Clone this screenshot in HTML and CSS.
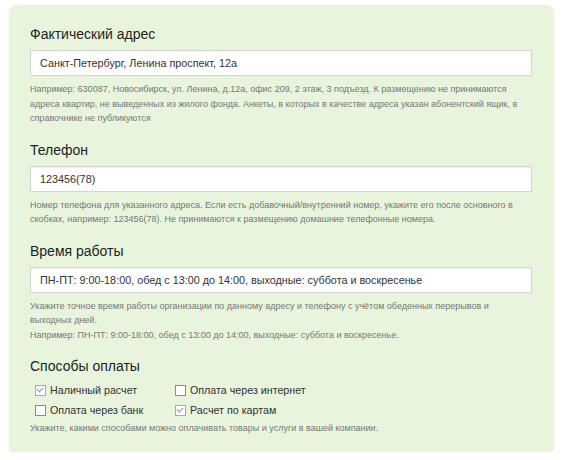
FILE: index.html
```html
<!DOCTYPE html>
<html lang="ru">
<head>
<meta charset="utf-8">
<link rel="stylesheet" href="styles.css">
</head>
<body>
<form class="panel">
  <div class="field">
    <h2 class="label">Фактический адрес</h2>
    <div class="input">Санкт-Петербург, Ленина проспект, 12а</div>
    <p class="help">Например: 630087, Новосибирск, ул. Ленина, д.12а, офис 209, 2 этаж, 3 подъезд. К размещению не принимаются<br>адреса квартир, не выведенных из жилого фонда. Анкеты, в которых в качестве адреса указан абонентский ящик, в<br>справочнике не публикуются</p>
  </div>
  <div class="field">
    <h2 class="label">Телефон</h2>
    <div class="input">123456(78)</div>
    <p class="help">Номер телефона для указанного адреса. Если есть добавочный/внутренний номер, укажите его после основного в<br>скобках, например: 123456(78). Не принимаются к размещению домашние телефонные номера.</p>
  </div>
  <div class="field">
    <h2 class="label">Время работы</h2>
    <div class="input">ПН-ПТ: 9:00-18:00, обед с 13:00 до 14:00, выходные: суббота и воскресенье</div>
    <p class="help">Укажите точное время работы организации по данному адресу и телефону с учётом обеденных перерывов и<br>выходных дней.<br>Например: ПН-ПТ: 9:00-18:00, обед с 13:00 до 14:00, выходные: суббота и воскресенье.</p>
  </div>
  <div class="field last">
    <h2 class="label">Способы оплаты</h2>
    <div class="checks">
      <label class="check"><span class="box on"></span>Наличный расчет</label>
      <label class="check"><span class="box"></span>Оплата через интернет</label>
      <label class="check"><span class="box"></span>Оплата через банк</label>
      <label class="check"><span class="box on"></span>Расчет по картам</label>
    </div>
    <p class="help short">Укажите, какими способами можно оплачивать товары и услуги в вашей компании.</p>
  </div>
</form>
</body>
</html>
```
FILE: styles.css
```css
html, body {
  margin: 0;
  padding: 0;
  background: #ffffff;
}
body {
  font-family: "Liberation Sans", Arial, sans-serif;
  color: #222;
}
.panel {
  margin: 5px 0 0 10px;
  width: 543px;
  box-sizing: border-box;
  padding: 19px 21px 16px 20px;
  background: #e8f4dc;
  border-radius: 6px;
  box-shadow: 0 2px 4px rgba(0, 0, 0, 0.13);
}
.field {
  margin-bottom: 14px;
}
.field.last {
  margin-bottom: 0;
}
.label {
  margin: 0 0 6px;
  font-size: 14px;
  line-height: 20px;
  font-weight: normal;
  color: #1e1e1e;
}
.input {
  height: 26px;
  box-sizing: border-box;
  border: 1px solid #d2d6cf;
  background: #fff;
  padding: 0 9px;
  font-size: 10.8px;
  line-height: 24px;
  color: #333;
  box-shadow: inset 0 1px 2px rgba(0, 0, 0, 0.06);
  white-space: nowrap;
}
.help {
  margin: 6px 0 0;
  font-size: 9px;
  line-height: 14.5px;
  color: #777;
  white-space: nowrap;
}
.help.short {
  margin-top: 3px;
}
.checks {
  display: grid;
  grid-template-columns: 140px auto;
  row-gap: 4px;
  justify-content: start;
  padding-left: 5px;
  margin-top: 2px;
}
.check {
  display: flex;
  align-items: center;
  gap: 4px;
  font-size: 10.7px;
  line-height: 16px;
  color: #333;
}
.box {
  width: 9px;
  height: 9px;
  border: 1px solid #8a8a8a;
  background: #fff;
  position: relative;
  flex: none;
}
.box.on {
  border-color: #aaa;
}
.box.on::after {
  content: "";
  position: absolute;
  left: 2px;
  top: 0px;
  width: 3px;
  height: 5px;
  border: solid #999;
  border-width: 0 1px 1px 0;
  transform: rotate(45deg);
}
```
